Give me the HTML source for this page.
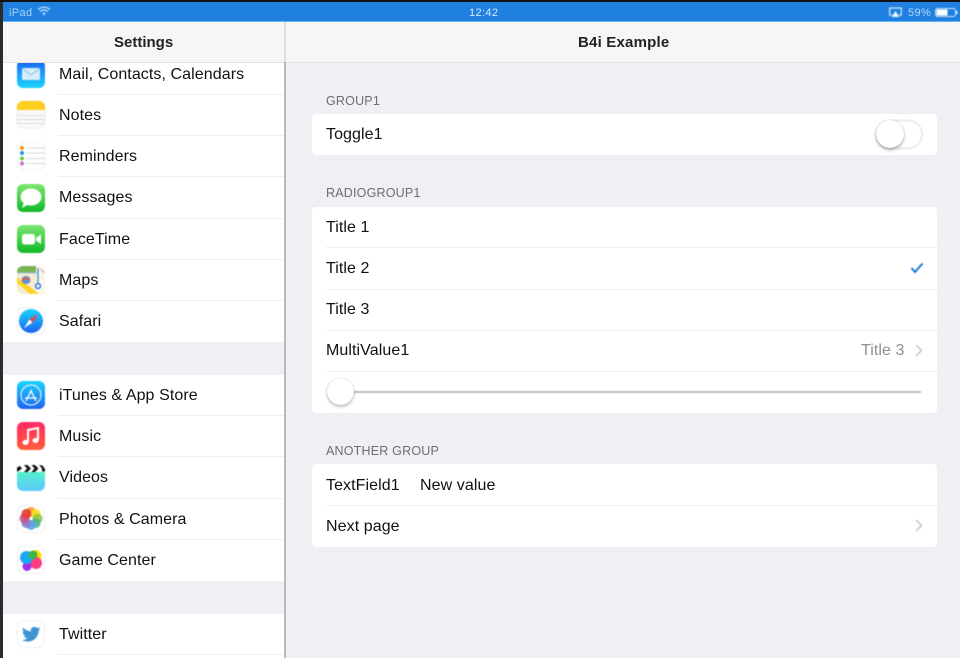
<!DOCTYPE html>
<html><head><meta charset="utf-8"><style>
html,body{margin:0;padding:0;background:#000}
#p{position:relative;width:960px;height:658px;overflow:hidden;background:#efeff4;font-family:"Liberation Sans",sans-serif;color:#1c1c1c}
#p div{position:absolute}
.t{font-size:16px;line-height:20px;white-space:nowrap;letter-spacing:.08px;margin-top:1px;filter:blur(.3px);color:#111}
.st{letter-spacing:.36px}
.h{font-size:12.5px;line-height:16px;color:#6d6d72;white-space:nowrap;letter-spacing:.2px;left:326px;filter:blur(.35px)}
.s{height:1px;background:#eeeeef}
.card{left:312px;width:625px;background:#fff;border-radius:4px}
</style></head><body><div id="p">
<div style="left:3px;top:62px;width:281px;height:596px;background:#fff"></div>
<div style="left:3px;top:342px;width:281px;height:33px;background:#efeff4"></div>
<div style="left:3px;top:581px;width:281px;height:33px;background:#efeff4"></div>
<div style="left:284px;top:62px;width:2px;height:596px;background:#b9b9bc"></div>
<div style="left:284px;top:22px;width:2px;height:40px;background:#dedee0"></div>
<div style="left:0;top:0;width:3px;height:658px;background:#2b2b2b"></div>
<div style="left:0;top:0;width:960px;height:2px;background:#111"></div>
<div style="left:3px;top:2px;width:957px;height:19px;background:#1f80e0"></div>
<div style="left:3px;top:21px;width:957px;height:1px;background:#5cb4f4"></div>
<div style="left:286px;top:22px;width:674px;height:40px;background:#f6f6f7;border-bottom:1px solid #e2e2e4"></div>

<div class="t st" style="left:9px;top:5px;font-size:11px;line-height:15px;color:#a9d2f6">iPad</div>
<div class="t st" style="left:469px;top:5px;font-size:11px;line-height:15px;color:#d6e9fb">12:42</div>
<div class="t st" style="left:908px;top:5px;font-size:11px;line-height:15px;color:#b5d8f8">59%</div>
<div class="t" style="left:578px;top:32px;font-weight:bold;font-size:15px;letter-spacing:.2px;color:#222">B4i Example</div>

<div class="t" style="left:59px;top:64px">Mail, Contacts, Calendars</div>
<div class="t" style="left:59px;top:105px">Notes</div>
<div class="t" style="left:59px;top:146px">Reminders</div>
<div class="t" style="left:59px;top:187px">Messages</div>
<div class="t" style="left:59px;top:229px">FaceTime</div>
<div class="t" style="left:59px;top:270px">Maps</div>
<div class="t" style="left:59px;top:311px">Safari</div>
<div class="t" style="left:59px;top:385px">iTunes &amp; App Store</div>
<div class="t" style="left:59px;top:426px">Music</div>
<div class="t" style="left:59px;top:467px">Videos</div>
<div class="t" style="left:59px;top:509px">Photos &amp; Camera</div>
<div class="t" style="left:59px;top:550px">Game Center</div>
<div class="t" style="left:59px;top:624px">Twitter</div>

<div class="s" style="left:58px;top:94px;width:226px"></div>
<div class="s" style="left:58px;top:135px;width:226px"></div>
<div class="s" style="left:58px;top:176px;width:226px"></div>
<div class="s" style="left:58px;top:218px;width:226px"></div>
<div class="s" style="left:58px;top:259px;width:226px"></div>
<div class="s" style="left:58px;top:300px;width:226px"></div>
<div class="s" style="left:58px;top:415px;width:226px"></div>
<div class="s" style="left:58px;top:456px;width:226px"></div>
<div class="s" style="left:58px;top:498px;width:226px"></div>
<div class="s" style="left:58px;top:539px;width:226px"></div>
<div class="s" style="left:58px;top:654px;width:226px"></div>

<div class="h" style="top:93px">GROUP1</div>
<div class="h" style="top:185px">RADIOGROUP1</div>
<div class="h" style="top:443px">ANOTHER GROUP</div>
<div class="card" style="top:114px;height:41px"></div>
<div class="card" style="top:207px;height:206px"></div>
<div class="card" style="top:464px;height:83px"></div>
<div class="s" style="left:326px;top:247px;width:611px"></div>
<div class="s" style="left:326px;top:289px;width:611px"></div>
<div class="s" style="left:326px;top:330px;width:611px"></div>
<div class="s" style="left:326px;top:371px;width:611px"></div>
<div class="s" style="left:326px;top:505px;width:611px"></div>

<div class="t" style="left:326px;top:124px">Toggle1</div>
<div class="t" style="left:326px;top:217px">Title 1</div>
<div class="t" style="left:326px;top:258px">Title 2</div>
<div class="t" style="left:326px;top:299px">Title 3</div>
<div class="t" style="left:326px;top:340px">MultiValue1</div>
<div class="t" style="left:861px;top:340px;color:#8e8e93">Title 3</div>
<div class="t" style="left:326px;top:475px">TextField1</div>
<div class="t" style="left:420px;top:475px">New value</div>
<div class="t" style="left:326px;top:516px">Next page</div>

<svg width="960" height="658" viewBox="0 0 960 658" style="position:absolute;left:0;top:0;filter:blur(.4px)">
<defs>
<linearGradient id="a" x1="0" y1="0" x2="0" y2="1"><stop offset="0" stop-color="#1d62f0"/><stop offset="1" stop-color="#1ad5fd"/></linearGradient>
<linearGradient id="b" x1="0" y1="0" x2="0" y2="1"><stop offset="0" stop-color="#7ee670"/><stop offset="1" stop-color="#10b828"/></linearGradient>
<linearGradient id="c" x1="0" y1="0" x2="0" y2="1"><stop offset="0" stop-color="#1ad5fd"/><stop offset="1" stop-color="#1d62f0"/></linearGradient>
<linearGradient id="d" x1="0" y1="0" x2="0" y2="1"><stop offset="0" stop-color="#ff2a68"/><stop offset="1" stop-color="#ff5e3a"/></linearGradient>
<linearGradient id="e" x1="0" y1="0" x2="0" y2="1"><stop offset="0" stop-color="#55efcb"/><stop offset="1" stop-color="#5bcaff"/></linearGradient>
</defs>
<!-- status bar -->
<path d="M38 9.5q6-4.6 12 0M40 11.5q4-3 8 0" fill="none" stroke="#b5d8f8" stroke-width="1.4"/><path d="M42 13.3q2-1.4 4 0L44 15.500z" fill="#b5d8f8"/>
<path d="M892 15H889.700V8H901.300V15H899" fill="none" stroke="#cfe5fa" stroke-width="1.300"/><path d="M891.500 17L895.500 11L899.500 17z" fill="#e6f2fd"/>
<rect x="935.500" y="8.500" width="20" height="8" rx="2" fill="none" stroke="#cfe5fa"/><rect x="936.500" y="9.500" width="11" height="6" fill="#fff"/><rect x="956" y="11" width="1.500" height="3" fill="#cfe5fa"/>
<!-- mail -->
<g transform="translate(17,60)"><rect width="28" height="28" rx="6" fill="url(#a)"/><rect x="5" y="8" width="18" height="12" rx="1" fill="#d8eefd"/><path d="M5.500 8.500L14 15L22.500 8.500" fill="none" stroke="#7dbcf5"/></g>
<!-- notes -->
<g transform="translate(17,101)"><rect width="28" height="27" rx="6" fill="#fafafa" stroke="#eee"/><path d="M0 9V6a6 6 0 0 1 6-6H22a6 6 0 0 1 6 6V9z" fill="#ffcd1f"/><path d="M0 14.500H28M0 18.500H28M0 22.500H28" stroke="#dcdcdc"/></g>
<!-- reminders -->
<g transform="translate(17,142)"><rect x=".5" y=".5" width="27" height="27" rx="6" fill="#fff" stroke="#f0f0f0"/><circle cx="5" cy="6" r="2" fill="#ff9500"/><circle cx="5" cy="11" r="2" fill="#1e90ef"/><circle cx="5" cy="16.500" r="2" fill="#6cc644"/><circle cx="5" cy="21.500" r="2" fill="#c86dd7"/><path d="M9 6H28M9 11H28M9 16.500H28M9 21.500H28" stroke="#d8d8d8"/></g>
<!-- messages -->
<g transform="translate(17,184)"><rect width="28" height="28" rx="6" fill="url(#b)"/><ellipse cx="14" cy="13" rx="10.500" ry="8.500" fill="#fff"/><path d="M7 18L5 24L12 20z" fill="#fff"/></g>
<!-- facetime -->
<g transform="translate(17,225)"><rect width="28" height="28" rx="6" fill="url(#b)"/><rect x="5" y="9" width="13" height="10.500" rx="2.500" fill="#fff"/><path d="M19 13L24 9.500V19L19 15.500z" fill="#fff"/></g>
<!-- maps -->
<g transform="translate(17,266)"><rect width="28" height="28" rx="6" fill="#f4ecd0"/><path d="M0 6a6 6 0 0 1 6-6H19V7H0z" fill="#79b553"/><path d="M19 0H22a6 6 0 0 1 6 6V28H19z" fill="#fbf6ea"/><path d="M0 17L13 28H22L0 11z" fill="#ffd426"/><path d="M0 7H20" stroke="#9ac5ee"/><ellipse cx="9" cy="14" rx="4.500" ry="4" fill="#5d8fd6"/><rect x="5.500" y="12" width="7" height="2" fill="#f05a4a"/><path d="M21 2V18" stroke="#3b88e0" stroke-width="1.300"/><circle cx="21" cy="20" r="2.400" fill="none" stroke="#2a7ae0" stroke-width="1.500"/><path d="M24 3L27 7" stroke="#f0a8b8" stroke-width="1.500"/></g>
<!-- safari -->
<g transform="translate(17,307)"><rect x=".5" y=".5" width="27" height="27" rx="6" fill="#fff" stroke="#f0f0f0"/><circle cx="14" cy="14" r="12" fill="url(#c)"/><path d="M21 7L12.500 12.500L15.500 15.500z" fill="#ff3b30"/><path d="M7 21L12.500 12.500L15.500 15.500z" fill="#fff"/></g>
<!-- app store -->
<g transform="translate(17,381)"><rect width="28" height="28" rx="6" fill="url(#c)"/><circle cx="14" cy="14" r="10" fill="none" stroke="#dbeefc" stroke-width="1.200"/><path d="M9 20L14.500 9M19 20L13.500 9M8 17H20" fill="none" stroke="#fff" stroke-width="1.300"/></g>
<!-- music -->
<g transform="translate(17,422)"><rect width="28" height="28" rx="6" fill="url(#d)"/><path d="M11 20V8L21 6V18" fill="none" stroke="#fff" stroke-width="2"/><ellipse cx="8.500" cy="20.500" rx="3" ry="2.500" fill="#fff"/><ellipse cx="18.500" cy="18.500" rx="3" ry="2.500" fill="#fff"/></g>
<!-- videos -->
<g transform="translate(17,463)"><path d="M0 9H28V22a6 6 0 0 1-6 6H6a6 6 0 0 1-6-6z" fill="url(#e)"/><path d="M0 4.500L3 3L5 5.500L1 8.500H0zM7 2L10.500 2L14 5.500L10.500 9H7L10 5.500zM14.500 2H18L21.500 5.500L18 9H14.500L17.500 5.500zM22 2L25.500 2.500L28 6V8.500H25L25 5.500z" fill="#111"/></g>
<!-- photos -->
<g transform="translate(17,505)"><rect x=".5" y=".5" width="27" height="27" rx="6" fill="#fff" stroke="#f0f0f0"/>
<circle cx="14" cy="7" r="5" fill="#f59a23" opacity=".9"/><circle cx="18.600" cy="8.900" r="5" fill="#f8e024" opacity=".9"/><circle cx="20.500" cy="13.500" r="5" fill="#94c83d" opacity=".9"/><circle cx="18.600" cy="18.100" r="5" fill="#4fb58a" opacity=".9"/><circle cx="14" cy="20" r="5" fill="#5fa3e6" opacity=".9"/><circle cx="9.400" cy="18.100" r="5" fill="#8b7fd4" opacity=".9"/><circle cx="7.500" cy="13.500" r="5" fill="#c0588f" opacity=".9"/><circle cx="9.400" cy="8.900" r="5" fill="#e53d33" opacity=".9"/></g>
<!-- game center -->
<g transform="translate(17,546)"><rect x=".5" y=".5" width="27" height="27" rx="6" fill="#fff" stroke="#f0f0f0"/><circle cx="18.500" cy="10" r="6" fill="#ffdd00"/><circle cx="19" cy="17" r="6" fill="#ff3b82"/><circle cx="10" cy="20.500" r="4.500" fill="#a030e8"/><circle cx="9.500" cy="11.500" r="6.500" fill="#19a8f5"/><circle cx="16" cy="9" r="4.500" fill="#3cb54a"/></g>
<!-- twitter -->
<g transform="translate(17,620)"><rect x=".5" y=".5" width="27" height="27" rx="6" fill="#fff" stroke="#f0f0f0"/><path d="M23 8.500c-.7.3-1.400.5-2.100.6.800-.5 1.300-1.200 1.600-2-.7.400-1.500.7-2.300.9a3.700 3.700 0 0 0-6.300 3.400C10.800 11.200 8 9.800 6.200 7.500c-1 1.700-.5 3.900 1.100 4.900-.6 0-1.200-.2-1.700-.5 0 1.800 1.300 3.300 3 3.700-.5.100-1.100.2-1.700.100.5 1.500 1.900 2.500 3.500 2.600-1.600 1.300-3.600 1.800-5.500 1.600 6 3.800 15.900 1.300 16.900-9.500.7-.5 1.400-1.200 1.900-1.900z" fill="#3f94d6"/></g>
<!-- check -->
<path d="M911.500 268L915 272L922.500 263.500" fill="none" stroke="#1a78e0" stroke-width="2"/>
<!-- chevrons -->
<path d="M916 345L921.500 350.500L916 356M916 520L921.500 525.500L916 531" fill="none" stroke="#c4c4c8" stroke-width="1.500"/>
<!-- switch -->
<rect x="876" y="120.500" width="46" height="28" rx="14" fill="#fff" stroke="#e6e6e8" stroke-width="1.500"/>
<!-- slider -->
<rect x="340" y="391" width="581" height="2" fill="#bcbcbc"/>
</svg>
<div style="left:3px;top:22px;width:281px;height:40px;background:#f6f6f7;border-bottom:1px solid #e2e2e4"></div>
<div class="t" style="left:114px;top:32px;font-weight:bold;font-size:15px;letter-spacing:0;color:#222">Settings</div>
<div style="left:876px;top:120px;width:28px;height:28px;border-radius:50%;background:#fff;box-shadow:0 2px 3px rgba(0,0,0,.3),0 0 1px rgba(0,0,0,.25)"></div>
<div style="left:327px;top:378px;width:27px;height:27px;border-radius:50%;background:#fff;box-shadow:0 2px 3px rgba(0,0,0,.25),0 0 1px rgba(0,0,0,.25)"></div>
</div></body></html>
